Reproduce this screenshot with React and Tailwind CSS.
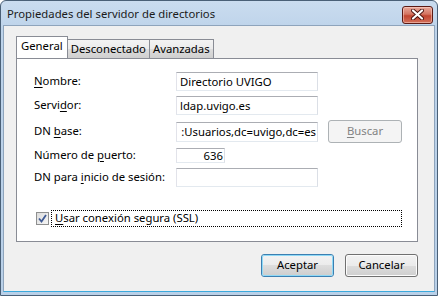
import React from "react";

const U = ({ children }) => <span className="underline underline-offset-[2px]">{children}</span>;

function Input({ value, w = "w-[142px]", h = "h-[19px]", align = "left", clip = false }) {
  return (
    <div
      className={`${w} ${h} bg-white border border-[#abadb3] border-b-[#e3e9ef] border-l-[#e2e3ea] border-r-[#dbdfe6] flex items-center overflow-hidden whitespace-nowrap ${
        align === "right" ? "justify-end pr-[1px]" : clip ? "justify-end pr-[1px]" : "pl-[3px]"
      }`}
    >
      <span className="leading-none">{value}</span>
    </div>
  );
}

function Row({ label, children, mt, h }) {
  return (
    <div className={`flex items-center ${mt} ${h}`}>
      <div className="w-[142px] whitespace-nowrap">{label}</div>
      {children}
    </div>
  );
}

export default function App() {
  return (
    <div
      className="w-[438px] h-[296px] flex flex-col bg-[linear-gradient(#cadcef,#bdd3ea_30px,#b9d0e8)] border border-[#4a6077] rounded-t-[6px] text-[11.3px] text-black overflow-hidden"
      style={{ fontFamily: '"Segoe UI", "Noto Sans", "Open Sans", sans-serif' }}
    >
      {/* title bar */}
      <div className="h-[24px] flex items-center justify-between pl-[6px] pr-[4px]">
        <span className="text-[#1b1b1b] mt-[3px]">Propiedades del servidor de directorios</span>
        <div className="w-[31px] h-[18px] mt-[3px] rounded-[3px] border border-[#5b1a14] bg-[linear-gradient(#e8a89a,#d47461_45%,#c24530_55%,#d3705a)] flex items-center justify-center shadow-[inset_0_0_0_1px_rgba(255,220,210,0.5)]">
          <svg width="13" height="11" viewBox="0 0 13 11">
            <path d="M2 1.5 L11 9.5 M11 1.5 L2 9.5" stroke="#4a1410" strokeWidth="4" strokeLinecap="round" />
            <path d="M2 1.5 L11 9.5 M11 1.5 L2 9.5" stroke="#ffffff" strokeWidth="2.2" strokeLinecap="round" />
          </svg>
        </div>
      </div>

      {/* client area */}
      <div className="flex-1 mx-[2px] mb-[3px] bg-[#f0f0f0] border border-[#8ea4bc] border-b-[#3aa9dc] flex flex-col pl-[12px] pt-[11px] pr-[16px]">
        {/* tabs */}
        <div className="flex items-end h-[21px] relative z-10">
          <div className="h-[22px] px-[4px] bg-white border border-[#898c95] border-b-0 flex items-center pb-[2px]">
            General
          </div>
          <div className="h-[19px] px-[3px] bg-[linear-gradient(#f3f3f3,#ebebeb_50%,#dddddd_50%,#cfcfcf)] border border-[#898c95] border-l-0 border-b-0 flex items-center">
            Desconectado
          </div>
          <div className="h-[19px] px-[3px] bg-[linear-gradient(#f3f3f3,#ebebeb_50%,#dddddd_50%,#cfcfcf)] border border-[#898c95] border-l-0 border-b-0 flex items-center">
            Avanzadas
          </div>
        </div>

        {/* panel */}
        <div className="h-[184px] bg-white border border-[#898c95] flex flex-col pl-[17px] pr-[15px]">
          <Row label={<><U>N</U>ombre:</>} mt="mt-[13px]" h="h-[19px]">
            <Input value="Directorio UVIGO" />
          </Row>
          <Row label={<>Servi<U>d</U>or:</>} mt="mt-[5px]" h="h-[19px]">
            <Input value="ldap.uvigo.es" />
          </Row>
          <Row label={<>DN <U>b</U>ase:</>} mt="mt-[5px]" h="h-[23px]">
            <Input value=":Usuarios,dc=uvigo,dc=es" h="h-[20px]" clip />
            <div className="ml-[10px] w-[74px] h-[23px] rounded-[3px] border border-[#adb2b5] bg-[#f4f4f4] text-[#838383] flex items-center justify-center">
              <span><U>B</U>uscar</span>
            </div>
          </Row>
          <Row label={<>Número de <U>p</U>uerto:</>} mt="mt-[5px]" h="h-[15px]">
            <Input value="636" w="w-[49px]" h="h-[15px]" align="right" />
          </Row>
          <Row label={<>DN para <U>i</U>nicio de sesión:</>} mt="mt-[5px]" h="h-[19px]">
            <Input value="" />
          </Row>

          <div className="mt-[23px] flex items-center h-[17px] ml-[2px]">
            <div className="w-[13px] h-[13px] border border-[#8e8f8f] bg-[linear-gradient(135deg,#dcdcdc,#f6f6f6)] flex items-center justify-center">
              <svg width="9" height="9" viewBox="0 0 9 9">
                <path d="M1 4.5 L3.5 7.5 L8 1" stroke="#3f5a94" strokeWidth="1.8" fill="none" />
              </svg>
            </div>
            <div className="ml-[2px] h-[17px] flex-1 border border-dotted border-black flex items-center pl-[3px]">
              <span><U>U</U>sar conexión segura (SSL)</span>
            </div>
          </div>
        </div>

        {/* buttons */}
        <div className="flex justify-end gap-[11px] mt-[12px]">
          <div className="w-[73px] h-[23px] rounded-[3px] border border-[#3c7fb1] flex items-center justify-center">
            <div className="w-full h-full rounded-[2px] bg-[linear-gradient(#f2f2f2,#ebebeb_50%,#dddddd_50%,#cfcfcf)] border border-[#8fd9f6] flex items-center justify-center">
              Aceptar
            </div>
          </div>
          <div className="w-[73px] h-[23px] rounded-[3px] border border-[#707070] bg-[linear-gradient(#f2f2f2,#ebebeb_50%,#dddddd_50%,#cfcfcf)] shadow-[inset_0_0_0_1px_#fcfcfc] flex items-center justify-center">
            Cancelar
          </div>
        </div>
      </div>
    </div>
  );
}
